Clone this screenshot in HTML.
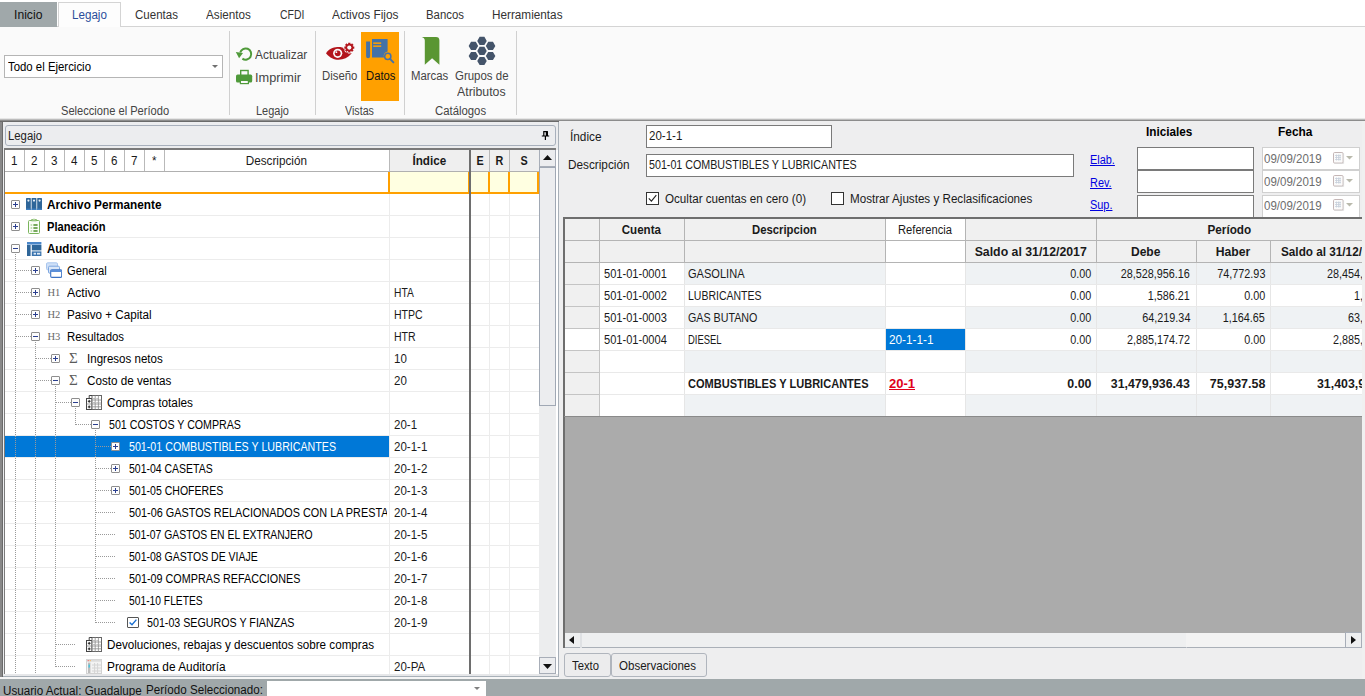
<!DOCTYPE html>
<html>
<head>
<meta charset="utf-8">
<title>Legajo</title>
<style>
*{box-sizing:border-box;margin:0;padding:0}
html,body{width:1365px;height:696px;overflow:hidden;background:#f0f0f0}
body{font-family:"Liberation Sans",sans-serif;font-size:12px;color:#1a1a1a;position:relative}
.a{position:absolute;white-space:nowrap}
.t{position:absolute;white-space:nowrap;line-height:14px;height:14px}
.c{text-align:center}
.r{text-align:right}
.b{font-weight:bold}
/* tabs */
#tabs{left:0;top:0;width:1365px;height:27px;background:#fff}
#tabline{left:0;top:26px;width:1365px;height:1px;background:#d4d4d4}
#tInicio{left:0;top:2px;width:57px;height:25px;background:#a0a8aa}
#tLegajo{left:58px;top:2px;width:63px;height:25px;background:#fdfdfd;border:1px solid #d4d4d4;border-bottom:none}
.tab{top:8px;font-size:12.5px;color:#333}
/* ribbon */
#ribbon{left:0;top:27px;width:1365px;height:92px;background:#fafafa}
.sep{width:1px;top:31px;height:84px;background:#d0d0d0}
.glabel{top:104px;color:#333;font-size:12px}
/* panels */
#darkline{left:0;top:118px;width:1365px;height:4px;background:linear-gradient(#e6e6e6 0 25%,#bcbcbc 25% 50%,#8c8c8c 50% 75%,#6a6a6a 75%)}
#status{left:0;top:679px;width:1365px;height:17px;background:#a0a8aa}

.vd{width:1px;background-image:linear-gradient(#9a9a9a 50%,transparent 50%);background-size:1px 2px}
.hd{height:1px;background-image:linear-gradient(90deg,#9a9a9a 50%,transparent 50%);background-size:2px 1px}
.bx{width:9px;height:9px;border:1px solid #8e8e8e;background:#fdfdfd;border-radius:1px}
.bx i{position:absolute;background:#2b3f8f}
.bx i.h{left:1px;top:3px;width:5px;height:1px}
.bx i.v{left:3px;top:1px;width:1px;height:5px}
</style>
</head>
<body>
<!--TOP-->
<div class="a" id="tabs"></div>
<div class="a" id="tabline"></div>
<div class="a" id="tInicio"></div>
<div class="a" id="tLegajo"></div>
<div class="t" style="top:8px;left:14.4px;transform-origin:0 50%;transform:scaleX(0.9730);color:#111;font-size:12.5px;">Inicio</div>
<div class="t" style="top:8px;left:72.2px;transform-origin:0 50%;transform:scaleX(0.9295);color:#2a4d9b;font-size:12.5px;">Legajo</div>
<div class="t" style="top:8px;left:135.2px;transform-origin:0 50%;transform:scaleX(0.9213);color:#333;font-size:12.5px;">Cuentas</div>
<div class="t" style="top:8px;left:206px;transform-origin:0 50%;transform:scaleX(0.9342);color:#333;font-size:12.5px;">Asientos</div>
<div class="t" style="top:8px;left:279.5px;transform-origin:0 50%;transform:scaleX(0.8364);color:#333;font-size:12.5px;">CFDI</div>
<div class="t" style="top:8px;left:331.5px;transform-origin:0 50%;transform:scaleX(0.9477);color:#333;font-size:12.5px;">Activos Fijos</div>
<div class="t" style="top:8px;left:426px;transform-origin:0 50%;transform:scaleX(0.9112);color:#333;font-size:12.5px;">Bancos</div>
<div class="t" style="top:8px;left:492px;transform-origin:0 50%;transform:scaleX(0.9398);color:#333;font-size:12.5px;">Herramientas</div>
<div class="a" id="ribbon"></div>
<div class="a" style="left:4px;top:55px;width:219px;height:23px;background:#fff;border:1px solid #b5b5b5"></div>
<div class="t" style="top:60px;left:7.5px;transform-origin:0 50%;transform:scaleX(0.9495);color:#000;">Todo el Ejercicio</div>
<svg class="a" style="left:212px;top:65px" width="6" height="3"><path d="M0 0h6L3 3z" fill="#707070"/></svg>
<div class="t" style="top:104px;left:60.5px;transform-origin:0 50%;transform:scaleX(0.9262);color:#444;">Seleccione el Período</div>
<div class="a sep" style="left:229px"></div>
<svg class="a" style="left:232px;top:40px" width="24" height="24" viewBox="0 0 24 24"><path d="M8.2 12.6A5.6 5.6 0 1 1 10.4 18.6" fill="none" stroke="#4f9a3a" stroke-width="2"/><path d="M3.8 12l7.2 1-3.9 5.2z" fill="#4f9a3a"/></svg>
<div class="t" style="top:48px;left:254.9px;transform-origin:0 50%;transform:scaleX(0.9528);color:#444;font-size:12.5px;">Actualizar</div>
<svg class="a" style="left:232px;top:64px" width="24" height="24" viewBox="0 0 24 24"><rect x="8.7" y="6.5" width="7.4" height="6" fill="#fafafa" stroke="#4f9a3a" stroke-width="1.4"/><rect x="4" y="10.6" width="16.2" height="8" rx="1.6" fill="#4f9a3a"/><rect x="8.4" y="16.4" width="8" height="3.2" fill="#fafafa" stroke="#4f9a3a" stroke-width="1.2"/></svg>
<div class="t" style="top:71px;left:254.9px;transform-origin:0 50%;transform:scaleX(1.0197);color:#444;font-size:12.5px;">Imprimir</div>
<div class="t" style="top:104px;left:255.6px;transform-origin:0 50%;transform:scaleX(0.9131);color:#444;">Legajo</div>
<div class="a sep" style="left:315px"></div>
<svg class="a" style="left:318px;top:30px" width="44" height="40" viewBox="0 0 44 40"><path d="M8 23.2C12 17.6 17 17 20.6 17C25.5 17 30 19.5 33.6 23.6C30 27.8 25.5 29.8 20.6 29.8C16 29.8 12 28 8 23.2z" fill="#b3151c"/><circle cx="19.7" cy="23.3" r="4.6" fill="#fafafa"/><circle cx="19.7" cy="23.3" r="2.9" fill="#b3151c"/><circle cx="18.4" cy="22.2" r="0.9" fill="#fafafa"/><path d="M37.15 16.25L37.15 18.95L36.09 19.02L35.69 19.99L36.39 20.78L34.48 22.69L33.69 21.99L32.72 22.39L32.65 23.45L29.95 23.45L29.88 22.39L28.91 21.99L28.12 22.69L26.21 20.78L26.91 19.99L26.51 19.02L25.45 18.95L25.45 16.25L26.51 16.18L26.91 15.21L26.21 14.42L28.12 12.51L28.91 13.21L29.88 12.81L29.95 11.75L32.65 11.75L32.72 12.81L33.69 13.21L34.48 12.51L36.39 14.42L35.69 15.21L36.09 16.18z" fill="#fafafa"/><circle cx="31.3" cy="17.6" r="5.0" fill="#fafafa"/><path d="M36.27 16.45L36.27 18.75L35.04 18.71L34.73 19.46L35.63 20.30L34.00 21.93L33.16 21.03L32.41 21.34L32.45 22.57L30.15 22.57L30.19 21.34L29.44 21.03L28.60 21.93L26.97 20.30L27.87 19.46L27.56 18.71L26.33 18.75L26.33 16.45L27.56 16.49L27.87 15.74L26.97 14.90L28.60 13.27L29.44 14.17L30.19 13.86L30.15 12.63L32.45 12.63L32.41 13.86L33.16 14.17L34.00 13.27L35.63 14.90L34.73 15.74L35.04 16.49z" fill="#b3151c"/><circle cx="31.3" cy="17.6" r="2.1" fill="#fafafa"/></svg>
<div class="t" style="top:69px;left:322.1px;transform-origin:0 50%;transform:scaleX(0.9095);color:#444;font-size:12.5px;">Diseño</div>
<div class="a" style="left:361px;top:32px;width:38px;height:69px;background:#ffa000"></div>
<svg class="a" style="left:361px;top:32px" width="38" height="36" viewBox="0 0 38 36"><path d="M5.1 9.6h4v14.6a2 2 0 0 1-4 0z" fill="#4472a8"/><path d="M11 6.9h15.6v12.6a4.4 4.4 0 0 0-3.6 5.9H11z" fill="#4472a8"/><rect x="12.2" y="10.4" width="8" height="1.5" fill="#ffa000"/><rect x="12.2" y="13.4" width="8" height="1.5" fill="#ffa000"/><circle cx="26.8" cy="24.4" r="3.1" fill="none" stroke="#4472a8" stroke-width="1.5"/><path d="M29 26.8l3.4 3.6" stroke="#4472a8" stroke-width="1.9" stroke-linecap="round"/></svg>
<div class="t" style="top:69px;left:365.7px;transform-origin:0 50%;transform:scaleX(0.9003);color:#111;font-size:12.5px;">Datos</div>
<div class="t" style="top:104px;left:345.3px;transform-origin:0 50%;transform:scaleX(0.8908);color:#444;">Vistas</div>
<div class="a sep" style="left:404px"></div>
<svg class="a" style="left:404px;top:30px" width="112" height="40" viewBox="0 0 112 40"><path d="M17.6 7h14.4a3.4 3.4 0 0 1 3.4 3.4v24.3l-7.3-6.4-7.3 6.4V10.6c0-2-1.2-3.2-3.2-3.6z" fill="#5a9632"/><path d="M82.75 10.90L80.38 15.01L75.62 15.01L73.25 10.90L75.62 6.79L80.38 6.79zM82.75 20.95L80.38 25.06L75.62 25.06L73.25 20.95L75.62 16.84L80.38 16.84zM82.75 31.00L80.38 35.11L75.62 35.11L73.25 31.00L75.62 26.89L80.38 26.89zM74.15 15.90L71.78 20.01L67.03 20.01L64.65 15.90L67.03 11.79L71.78 11.79zM74.15 26.00L71.78 30.11L67.03 30.11L64.65 26.00L67.03 21.89L71.78 21.89zM91.35 15.90L88.97 20.01L84.22 20.01L81.85 15.90L84.22 11.79L88.97 11.79zM91.35 26.00L88.97 30.11L84.22 30.11L81.85 26.00L84.22 21.89L88.97 21.89z" fill="#44546a"/></svg>
<div class="t" style="top:69px;left:411.3px;transform-origin:0 50%;transform:scaleX(0.9105);color:#444;font-size:12.5px;">Marcas</div>

<div class="t" style="top:69px;left:455.4px;transform-origin:0 50%;transform:scaleX(0.9167);color:#444;font-size:12.5px;">Grupos de</div>
<div class="t" style="top:85px;left:457.1px;transform-origin:0 50%;transform:scaleX(0.9852);color:#444;font-size:12.5px;">Atributos</div>
<div class="t" style="top:104px;left:435.4px;transform-origin:0 50%;transform:scaleX(0.9457);color:#444;">Catálogos</div>
<div class="a sep" style="left:516px"></div>
<div class="a" id="darkline"></div>
<!--/TOP-->
<svg width="0" height="0" style="position:absolute"><defs>
<g id="i-arch"><rect x="0" y="2" width="4.8" height="12" rx="0.6" fill="#2f6699"/><rect x="5.6" y="2" width="4.8" height="12" rx="0.6" fill="#2f6699"/><rect x="11.2" y="2" width="4.8" height="12" rx="0.6" fill="#2f6699"/><circle cx="2.4" cy="4.6" r="1.1" fill="#e8f0f8"/><circle cx="8" cy="4.6" r="1.1" fill="#e8f0f8"/><circle cx="13.6" cy="4.6" r="1.1" fill="#e8f0f8"/><rect x="0" y="12.6" width="4.8" height="1.4" fill="#3f7fc0"/><rect x="5.6" y="12.6" width="4.8" height="1.4" fill="#3f7fc0"/><rect x="11.2" y="12.6" width="4.8" height="1.4" fill="#3f7fc0"/></g>
<g id="i-plan"><rect x="2.5" y="2.5" width="11" height="13" rx="1" fill="#fbfdf9" stroke="#7ab55c" stroke-width="1"/><path d="M5.5 2.8V1.6h1.6a1 1 0 0 1 1.8 0h1.6v1.2z" fill="#fbfdf9" stroke="#7ab55c" stroke-width="0.9"/><path d="M4.6 7h1.6M4.6 10h1.6M4.6 13h1.6" stroke="#8cc070" stroke-width="1"/><path d="M7.4 7h4.2M7.4 10h4.2M7.4 13h4.2" stroke="#4e8f2c" stroke-width="1.4"/></g>
<g id="i-aud"><rect x="1" y="2" width="14.4" height="2.6" fill="#4a86c8"/><rect x="1" y="5" width="3.6" height="11" fill="#2f6699"/><rect x="5.8" y="5" width="9.6" height="5.4" fill="#2f6699"/><rect x="5.8" y="11.4" width="9.6" height="4.6" fill="#3a73ad"/><rect x="7.6" y="12.8" width="2.4" height="1.8" fill="#dfe9f5"/><rect x="11" y="12.8" width="3.2" height="1.8" fill="#dfe9f5"/></g>
<g id="i-gen"><rect x="0.5" y="0.8" width="11" height="7" rx="1.2" fill="#cfe0f7" stroke="#a9c6ee" stroke-width="1"/><rect x="2.5" y="4.2" width="11" height="7" rx="1.2" fill="#dbe7f8" stroke="#7da7e0" stroke-width="1"/><rect x="4.7" y="7.8" width="11" height="7.6" rx="1.2" fill="#fff" stroke="#3b72c4" stroke-width="1.1"/><rect x="4.7" y="7.8" width="11" height="2.2" fill="#5b8fd8"/></g>
<g id="i-grid"><rect x="0.5" y="4.5" width="5.5" height="11" fill="#fff" stroke="#444" stroke-width="1"/><rect x="6" y="1.5" width="9.5" height="14" fill="#fff" stroke="#666" stroke-width="1"/><path d="M3.2 1.5v3M3.2 1.5h2.8" stroke="#444" stroke-width="1" fill="none"/><path d="M0.5 10h15M6 6h9.5M6 12.8h9.5M9.2 1.5v14M12.4 1.5v14" stroke="#8a8a8a" stroke-width="0.8" fill="none"/><path d="M1.8 7.3h2.8M3.2 5.9v2.8M1.8 12.9h2.8M3.2 11.5v2.8" stroke="#222" stroke-width="1"/><path d="M7 4l1 1 1-1M10.3 4l1 1 1-1M7 8l1 1 1-1M10.3 8l1 1 1-1M13.2 8l0.8 0.8 0.8-0.8" stroke="#9a9a9a" stroke-width="0.6" fill="none"/></g>
<g id="i-cal"><rect x="0.5" y="1.5" width="15" height="14" fill="#f3f3f3" stroke="#d2d2d2" stroke-width="1"/><rect x="0.5" y="1.5" width="15" height="2.2" fill="#dcdcdc"/><rect x="1.6" y="2" width="1.4" height="1.2" fill="#e88"/><rect x="3.6" y="2" width="1.4" height="1.2" fill="#f2c078"/><rect x="2" y="4.6" width="2.4" height="10.4" fill="#bdbdbd"/><rect x="2.4" y="6.6" width="1.6" height="3" fill="#4fc3dc"/><path d="M6 7h9M6 10h9M6 13h9M8.6 5v10M11.6 5v10" stroke="#d4d4d4" stroke-width="1"/></g>
</defs></svg>
<!--LEFT-->
<!-- LEFT PANEL -->
<div class="a" style="left:0;top:122px;width:5px;height:555px;background:linear-gradient(90deg,#888 0 2px,#6a6a6a 2px 3px,#a6a6a6 3px)"></div>
<div class="a" style="left:3px;top:122px;width:556px;height:556px;background:#ecedef"></div>
<div class="a" style="left:556px;top:150px;width:2px;height:526px;background:#fff"></div>
<div class="a" style="left:5px;top:125px;width:551px;height:21px;background:#ecedef;border:1px solid #a8b0bc;border-radius:3px"></div>
<div class="t" style="top:129px;left:8px;transform-origin:0 50%;transform:scaleX(0.9436);color:#222;">Legajo</div>
<svg class="a" style="left:541px;top:131px" width="9" height="9" viewBox="0 0 9 9"><path d="M2.2 0.6h4.6M2.8 0.6v4M5.4 0.6v4M6.4 0.6v4M0.8 5h7.4M4.4 5v4" stroke="#000" stroke-width="1.2" fill="none"/></svg>
<div class="a" style="left:4px;top:148px;width:552px;height:526px;background:#fff;border-top:2px solid #7a7a7a;border-left:1px solid #7a7a7a"></div>
<div class="a" style="left:389px;top:150px;width:150px;height:21px;background:#efefef"></div>
<div class="a" style="left:24px;top:150px;width:1px;height:21px;background:#b9b9b9"></div>
<div class="a" style="left:44px;top:150px;width:1px;height:21px;background:#b9b9b9"></div>
<div class="a" style="left:64px;top:150px;width:1px;height:21px;background:#b9b9b9"></div>
<div class="a" style="left:84px;top:150px;width:1px;height:21px;background:#b9b9b9"></div>
<div class="a" style="left:104px;top:150px;width:1px;height:21px;background:#b9b9b9"></div>
<div class="a" style="left:124px;top:150px;width:1px;height:21px;background:#b9b9b9"></div>
<div class="a" style="left:144px;top:150px;width:1px;height:21px;background:#b9b9b9"></div>
<div class="a" style="left:164px;top:150px;width:1px;height:21px;background:#b9b9b9"></div>
<div class="a" style="left:389px;top:150px;width:1px;height:21px;background:#b9b9b9"></div>
<div class="a" style="left:489px;top:150px;width:1px;height:21px;background:#b9b9b9"></div>
<div class="a" style="left:509px;top:150px;width:1px;height:21px;background:#b9b9b9"></div>
<div class="a" style="left:5px;top:171px;width:534px;height:1px;background:#b0b0b0"></div>
<div class="t" style="top:154px;left:11.16px;transform-origin:50% 50%;transform:scaleX(0.9700);">1</div>
<div class="t" style="top:154px;left:31.16px;transform-origin:50% 50%;transform:scaleX(0.9700);">2</div>
<div class="t" style="top:154px;left:51.16px;transform-origin:50% 50%;transform:scaleX(0.9700);">3</div>
<div class="t" style="top:154px;left:71.16px;transform-origin:50% 50%;transform:scaleX(0.9700);">4</div>
<div class="t" style="top:154px;left:91.16px;transform-origin:50% 50%;transform:scaleX(0.9700);">5</div>
<div class="t" style="top:154px;left:111.16px;transform-origin:50% 50%;transform:scaleX(0.9700);">6</div>
<div class="t" style="top:154px;left:131.16px;transform-origin:50% 50%;transform:scaleX(0.9700);">7</div>
<div class="t" style="top:154px;left:152.16px;transform-origin:50% 50%;transform:scaleX(0.9700);">*</div>
<div class="t" style="top:154px;left:244.65px;transform-origin:50% 50%;transform:scaleX(0.9760);">Descripción</div>
<div class="t b" style="top:154px;left:411.67px;transform-origin:50% 50%;transform:scaleX(0.9724);">Índice</div>
<div class="t b" style="top:154px;left:475.50px;transform-origin:50% 50%;transform:scaleX(0.9000);">E</div>
<div class="t b" style="top:154px;left:495.16px;transform-origin:50% 50%;transform:scaleX(0.9000);">R</div>
<div class="t b" style="top:154px;left:520.00px;transform-origin:50% 50%;transform:scaleX(0.9000);">S</div>
<div class="a" style="left:389px;top:172px;width:150px;height:20px;background:#ffffe1"></div>
<div class="a" style="left:5px;top:192px;width:534px;height:2px;background:#ffa000"></div>
<div class="a" style="left:388px;top:172px;width:2px;height:20px;background:#ffa000"></div>
<div class="a" style="left:468px;top:172px;width:2px;height:20px;background:#ffa000"></div>
<div class="a" style="left:488px;top:172px;width:2px;height:20px;background:#ffa000"></div>
<div class="a" style="left:508px;top:172px;width:2px;height:20px;background:#ffa000"></div>
<div class="a" style="left:537px;top:172px;width:2px;height:20px;background:#ffa000"></div>
<div class="a" style="left:5px;top:215px;width:534px;height:1px;background:#ececec"></div>
<div class="a" style="left:5px;top:237px;width:534px;height:1px;background:#ececec"></div>
<div class="a" style="left:5px;top:259px;width:534px;height:1px;background:#ececec"></div>
<div class="a" style="left:5px;top:281px;width:534px;height:1px;background:#ececec"></div>
<div class="a" style="left:5px;top:303px;width:534px;height:1px;background:#ececec"></div>
<div class="a" style="left:5px;top:325px;width:534px;height:1px;background:#ececec"></div>
<div class="a" style="left:5px;top:347px;width:534px;height:1px;background:#ececec"></div>
<div class="a" style="left:5px;top:369px;width:534px;height:1px;background:#ececec"></div>
<div class="a" style="left:5px;top:391px;width:534px;height:1px;background:#ececec"></div>
<div class="a" style="left:5px;top:413px;width:534px;height:1px;background:#ececec"></div>
<div class="a" style="left:5px;top:435px;width:534px;height:1px;background:#ececec"></div>
<div class="a" style="left:5px;top:457px;width:534px;height:1px;background:#ececec"></div>
<div class="a" style="left:5px;top:479px;width:534px;height:1px;background:#ececec"></div>
<div class="a" style="left:5px;top:501px;width:534px;height:1px;background:#ececec"></div>
<div class="a" style="left:5px;top:523px;width:534px;height:1px;background:#ececec"></div>
<div class="a" style="left:5px;top:545px;width:534px;height:1px;background:#ececec"></div>
<div class="a" style="left:5px;top:567px;width:534px;height:1px;background:#ececec"></div>
<div class="a" style="left:5px;top:589px;width:534px;height:1px;background:#ececec"></div>
<div class="a" style="left:5px;top:611px;width:534px;height:1px;background:#ececec"></div>
<div class="a" style="left:5px;top:633px;width:534px;height:1px;background:#ececec"></div>
<div class="a" style="left:5px;top:655px;width:534px;height:1px;background:#ececec"></div>
<div class="a" style="left:389px;top:194px;width:1px;height:482px;background:#ececec"></div>
<div class="a" style="left:489px;top:194px;width:1px;height:482px;background:#ececec"></div>
<div class="a" style="left:509px;top:194px;width:1px;height:482px;background:#ececec"></div>
<div class="a" style="left:469px;top:150px;width:2px;height:526px;background:#6e6e6e"></div>
<div class="a" style="left:5px;top:436px;width:384px;height:21px;background:#0078d7"></div>
<div class="a vd" style="left:15px;top:254px;height:419px"></div>
<div class="a vd" style="left:35px;top:342px;height:331px"></div>
<div class="a vd" style="left:55px;top:386px;height:281px"></div>
<div class="a vd" style="left:75px;top:408px;height:17px"></div>
<div class="a vd" style="left:95px;top:430px;height:193px"></div>
<div class="a hd" style="left:16px;top:270px;width:15px"></div>
<div class="a hd" style="left:16px;top:292px;width:15px"></div>
<div class="a hd" style="left:16px;top:314px;width:15px"></div>
<div class="a hd" style="left:16px;top:336px;width:15px"></div>
<div class="a hd" style="left:36px;top:358px;width:15px"></div>
<div class="a hd" style="left:36px;top:380px;width:15px"></div>
<div class="a hd" style="left:56px;top:402px;width:15px"></div>
<div class="a hd" style="left:76px;top:424px;width:15px"></div>
<div class="a hd" style="left:96px;top:446px;width:15px"></div>
<div class="a hd" style="left:96px;top:468px;width:15px"></div>
<div class="a hd" style="left:96px;top:490px;width:15px"></div>
<div class="a hd" style="left:96px;top:512px;width:19px"></div>
<div class="a hd" style="left:96px;top:534px;width:19px"></div>
<div class="a hd" style="left:96px;top:556px;width:19px"></div>
<div class="a hd" style="left:96px;top:578px;width:19px"></div>
<div class="a hd" style="left:96px;top:600px;width:19px"></div>
<div class="a hd" style="left:96px;top:622px;width:19px"></div>
<div class="a hd" style="left:56px;top:644px;width:19px"></div>
<div class="a hd" style="left:56px;top:666px;width:19px"></div>
<div class="a bx" style="left:11px;top:200px"><i class="h"></i><i class="v"></i></div>
<svg class="a" style="left:26px;top:196px" width="16" height="16" viewBox="0 0 16 16"><use href="#i-arch"/></svg>
<div class="t b" style="top:198px;left:47px;transform-origin:0 50%;transform:scaleX(0.9813);color:#000;">Archivo Permanente</div>
<div class="a bx" style="left:11px;top:222px"><i class="h"></i><i class="v"></i></div>
<svg class="a" style="left:26px;top:218px" width="16" height="16" viewBox="0 0 16 16"><use href="#i-plan"/></svg>
<div class="t b" style="top:220px;left:47px;transform-origin:0 50%;transform:scaleX(0.9253);color:#000;">Planeación</div>
<div class="a bx" style="left:11px;top:244px"><i class="h"></i></div>
<svg class="a" style="left:26px;top:240px" width="16" height="16" viewBox="0 0 16 16"><use href="#i-aud"/></svg>
<div class="t b" style="top:242px;left:47px;transform-origin:0 50%;transform:scaleX(0.9609);color:#000;">Auditoría</div>
<div class="a bx" style="left:31px;top:266px"><i class="h"></i><i class="v"></i></div>
<svg class="a" style="left:46px;top:262px" width="16" height="16" viewBox="0 0 16 16"><use href="#i-gen"/></svg>
<div class="t" style="top:264px;left:67px;transform-origin:0 50%;transform:scaleX(0.9324);color:#000;">General</div>
<div class="a bx" style="left:31px;top:288px"><i class="h"></i><i class="v"></i></div>
<div class="t" style="left:47.4px;top:286px;font-family:'Liberation Serif',serif;font-size:10.5px;color:#666">H1</div>
<div class="t" style="top:286px;left:67px;transform-origin:0 50%;transform:scaleX(1.0223);color:#000;">Activo</div>
<div class="t" style="top:286px;left:394.3px;transform-origin:0 50%;transform:scaleX(0.8547);">HTA</div>
<div class="a bx" style="left:31px;top:310px"><i class="h"></i><i class="v"></i></div>
<div class="t" style="left:47.4px;top:308px;font-family:'Liberation Serif',serif;font-size:10.5px;color:#666">H2</div>
<div class="t" style="top:308px;left:67px;transform-origin:0 50%;transform:scaleX(0.9719);color:#000;">Pasivo + Capital</div>
<div class="t" style="top:308px;left:394.3px;transform-origin:0 50%;transform:scaleX(0.8784);">HTPC</div>
<div class="a bx" style="left:31px;top:332px"><i class="h"></i></div>
<div class="t" style="left:47.4px;top:330px;font-family:'Liberation Serif',serif;font-size:10.5px;color:#666">H3</div>
<div class="t" style="top:330px;left:67px;transform-origin:0 50%;transform:scaleX(0.9495);color:#000;">Resultados</div>
<div class="t" style="top:330px;left:394.3px;transform-origin:0 50%;transform:scaleX(0.8795);">HTR</div>
<div class="a bx" style="left:51px;top:354px"><i class="h"></i><i class="v"></i></div>
<div class="t" style="left:69px;top:351px;font-family:'Liberation Serif',serif;font-size:15px;color:#5a5a5a">Σ</div>
<div class="t" style="top:352px;left:87px;transform-origin:0 50%;transform:scaleX(0.9620);color:#000;">Ingresos netos</div>
<div class="t" style="top:352px;left:394.3px;transform-origin:0 50%;transform:scaleX(0.9600);">10</div>
<div class="a bx" style="left:51px;top:376px"><i class="h"></i></div>
<div class="t" style="left:69px;top:373px;font-family:'Liberation Serif',serif;font-size:15px;color:#5a5a5a">Σ</div>
<div class="t" style="top:374px;left:87px;transform-origin:0 50%;transform:scaleX(0.9736);color:#000;">Costo de ventas</div>
<div class="t" style="top:374px;left:394.3px;transform-origin:0 50%;transform:scaleX(0.9600);">20</div>
<div class="a bx" style="left:71px;top:398px"><i class="h"></i></div>
<svg class="a" style="left:86px;top:394px" width="16" height="16" viewBox="0 0 16 16"><use href="#i-grid"/></svg>
<div class="t" style="top:396px;left:107px;transform-origin:0 50%;transform:scaleX(0.9844);color:#000;">Compras totales</div>
<div class="a bx" style="left:91px;top:420px"><i class="h"></i></div>
<div class="t" style="top:418px;left:109.2px;transform-origin:0 50%;transform:scaleX(0.8874);color:#000;">501 COSTOS Y COMPRAS</div>
<div class="t" style="top:418px;left:394.3px;transform-origin:0 50%;transform:scaleX(0.9600);">20-1</div>
<div class="a bx" style="left:111px;top:442px"><i class="h"></i><i class="v"></i></div>
<div class="t" style="top:440px;left:129.2px;transform-origin:0 50%;transform:scaleX(0.8888);color:#fff;">501-01 COMBUSTIBLES Y LUBRICANTES</div>
<div class="t" style="top:440px;left:394.3px;transform-origin:0 50%;transform:scaleX(0.9600);">20-1-1</div>
<div class="a bx" style="left:111px;top:464px"><i class="h"></i><i class="v"></i></div>
<div class="t" style="top:462px;left:129.2px;transform-origin:0 50%;transform:scaleX(0.8730);color:#000;">501-04 CASETAS</div>
<div class="t" style="top:462px;left:394.3px;transform-origin:0 50%;transform:scaleX(0.9600);">20-1-2</div>
<div class="a bx" style="left:111px;top:486px"><i class="h"></i><i class="v"></i></div>
<div class="t" style="top:484px;left:129.2px;transform-origin:0 50%;transform:scaleX(0.8774);color:#000;">501-05 CHOFERES</div>
<div class="t" style="top:484px;left:394.3px;transform-origin:0 50%;transform:scaleX(0.9600);">20-1-3</div>
<div class="a" style="left:129px;top:506px;width:258px;height:14px;overflow:hidden"><div class="t" style="top:0;left:0.19999999999998863px;transform-origin:0 50%;transform:scaleX(0.9040);color:#000;">501-06 GASTOS RELACIONADOS CON LA PRESTACION</div></div>
<div class="t" style="top:506px;left:394.3px;transform-origin:0 50%;transform:scaleX(0.9600);">20-1-4</div>
<div class="t" style="top:528px;left:129.2px;transform-origin:0 50%;transform:scaleX(0.8652);color:#000;">501-07 GASTOS EN EL EXTRANJERO</div>
<div class="t" style="top:528px;left:394.3px;transform-origin:0 50%;transform:scaleX(0.9600);">20-1-5</div>
<div class="t" style="top:550px;left:129.2px;transform-origin:0 50%;transform:scaleX(0.8749);color:#000;">501-08 GASTOS DE VIAJE</div>
<div class="t" style="top:550px;left:394.3px;transform-origin:0 50%;transform:scaleX(0.9600);">20-1-6</div>
<div class="t" style="top:572px;left:129.2px;transform-origin:0 50%;transform:scaleX(0.8984);color:#000;">501-09 COMPRAS REFACCIONES</div>
<div class="t" style="top:572px;left:394.3px;transform-origin:0 50%;transform:scaleX(0.9600);">20-1-7</div>
<div class="t" style="top:594px;left:129.2px;transform-origin:0 50%;transform:scaleX(0.8568);color:#000;">501-10 FLETES</div>
<div class="t" style="top:594px;left:394.3px;transform-origin:0 50%;transform:scaleX(0.9600);">20-1-8</div>
<div class="a" style="left:127px;top:617px;width:12px;height:11px;border:1px solid #555;background:#fff;border-radius:1px"></div>
<svg class="a" style="left:128px;top:618px" width="10" height="9" viewBox="0 0 10 9"><path d="M1.6 4.4l2.4 2.4L8.4 1.6" fill="none" stroke="#1a6fd0" stroke-width="1.4"/></svg>
<div class="t" style="top:616px;left:147.3px;transform-origin:0 50%;transform:scaleX(0.8904);color:#000;">501-03 SEGUROS Y FIANZAS</div>
<div class="t" style="top:616px;left:394.3px;transform-origin:0 50%;transform:scaleX(0.9600);">20-1-9</div>
<svg class="a" style="left:86px;top:636px" width="16" height="16" viewBox="0 0 16 16"><use href="#i-grid"/></svg>
<div class="t" style="top:638px;left:107px;transform-origin:0 50%;transform:scaleX(0.9717);color:#000;">Devoluciones, rebajas y descuentos sobre compras</div>
<svg class="a" style="left:86px;top:658px" width="16" height="16" viewBox="0 0 16 16"><use href="#i-cal"/></svg>
<div class="t" style="top:660px;left:107px;transform-origin:0 50%;transform:scaleX(0.9876);color:#000;">Programa de Auditoría</div>
<div class="t" style="top:660px;left:394.3px;transform-origin:0 50%;transform:scaleX(0.9600);">20-PA</div>
<div class="a" style="left:539px;top:150px;width:17px;height:525px;background:#ecedee"></div>
<div class="a" style="left:539px;top:150px;width:17px;height:17px;background:#ecedef;border:1px solid #a8aeb8;border-top:none"></div>
<div class="a" style="left:539px;top:167px;width:17px;height:239px;background:#ecedef;border:1px solid #a0a8b4"></div>
<div class="a" style="left:539px;top:657px;width:17px;height:17px;background:#ecedef;border:1px solid #a8aeb8"></div>
<svg class="a" style="left:543px;top:155px" width="9" height="5"><path d="M0 5h9L4.5 0z" fill="#111"/></svg>
<svg class="a" style="left:543px;top:664px" width="9" height="5"><path d="M0 0h9L4.5 5z" fill="#111"/></svg>
<div class="a" style="left:558px;top:122px;width:1px;height:555px;background:#a8b0b8"></div>
<div class="a" style="left:5px;top:674px;width:553px;height:2px;background:#e6e7e9"></div>
<div class="a" style="left:3px;top:676px;width:556px;height:1px;background:#a8b0b8"></div>
<div class="a" style="left:0;top:677px;width:1365px;height:2px;background:#f6f6f6"></div>
<!--/LEFT-->
<!--RIGHT-->
<!-- RIGHT PANEL -->
<div class="a" style="left:559px;top:121px;width:806px;height:558px;background:#eeeeef"></div>
<div class="t" style="top:130px;left:570px;transform-origin:0 50%;transform:scaleX(0.9839);">Índice</div>
<div class="a" style="left:646px;top:125px;width:186px;height:23px;background:#fff;border:1px solid #7a7a7a"></div>
<div class="t" style="top:129px;left:649px;transform-origin:0 50%;transform:scaleX(0.9600);">20-1-1</div>
<div class="t" style="top:158px;left:568px;transform-origin:0 50%;transform:scaleX(0.9808);">Descripción</div>
<div class="a" style="left:646px;top:154px;width:428px;height:23px;background:#fff;border:1px solid #7a7a7a"></div>
<div class="t" style="top:158px;left:649px;transform-origin:0 50%;transform:scaleX(0.8914);">501-01 COMBUSTIBLES Y LUBRICANTES</div>
<div class="a" style="left:646px;top:192px;width:13px;height:13px;background:#fff;border:1px solid #333"></div>
<svg class="a" style="left:648px;top:194px" width="9" height="9" viewBox="0 0 9 9"><path d="M0.8 4.4l2.6 2.8L8.3 1.2" fill="none" stroke="#222" stroke-width="1.1"/></svg>
<div class="t" style="top:192px;left:665px;transform-origin:0 50%;transform:scaleX(0.9700);">Ocultar cuentas en cero (0)</div>
<div class="a" style="left:831px;top:192px;width:13px;height:13px;background:#fff;border:1px solid #333"></div>
<div class="t" style="top:192px;left:850px;transform-origin:0 50%;transform:scaleX(0.9697);">Mostrar Ajustes y Reclasificaciones</div>
<div class="t b" style="top:125px;left:1146.4px;transform-origin:0 50%;transform:scaleX(0.9406);color:#000;font-size:12.5px;">Iniciales</div>
<div class="t b" style="top:125px;left:1278.4px;transform-origin:0 50%;transform:scaleX(0.9518);color:#000;font-size:12.5px;">Fecha</div>
<div class="t" style="top:153px;left:1090px;transform-origin:0 50%;transform:scaleX(0.9100);color:#0000e0;text-decoration:underline;">Elab.</div>
<div class="a" style="left:1137px;top:147px;width:117px;height:23px;background:#fff;border:1px solid #7a7a7a"></div>
<div class="a" style="left:1262px;top:147px;width:98px;height:23px;background:#fff;border:1px solid #d0d0d0"></div>
<div class="t" style="top:152px;left:1264px;transform-origin:0 50%;transform:scaleX(0.9595);color:#6d6d6d;">09/09/2019</div>
<svg class="a" style="left:1333px;top:152px" width="21" height="12" viewBox="0 0 21 12"><rect x="0.5" y="0.5" width="9.6" height="10.6" rx="1.2" fill="#fbfbfb" stroke="#c4b6b6"/><path d="M1.5 11.4h9M10.6 1.5v10" stroke="#d8d8d8" stroke-width="0.8"/><path d="M2 3.5h6M2 5.5h6M2 7.5h6M3.5 2.5v6M5.5 2.5v6M7 2.5v6" stroke="#c8d0dc" stroke-width="0.8"/><path d="M13 4h7L16.5 7.6z" fill="#b9b9ac"/></svg>
<div class="t" style="top:176px;left:1090px;transform-origin:0 50%;transform:scaleX(0.9100);color:#0000e0;text-decoration:underline;">Rev.</div>
<div class="a" style="left:1137px;top:170px;width:117px;height:23px;background:#fff;border:1px solid #7a7a7a"></div>
<div class="a" style="left:1262px;top:170px;width:98px;height:23px;background:#fff;border:1px solid #d0d0d0"></div>
<div class="t" style="top:175px;left:1264px;transform-origin:0 50%;transform:scaleX(0.9595);color:#6d6d6d;">09/09/2019</div>
<svg class="a" style="left:1333px;top:175px" width="21" height="12" viewBox="0 0 21 12"><rect x="0.5" y="0.5" width="9.6" height="10.6" rx="1.2" fill="#fbfbfb" stroke="#c4b6b6"/><path d="M1.5 11.4h9M10.6 1.5v10" stroke="#d8d8d8" stroke-width="0.8"/><path d="M2 3.5h6M2 5.5h6M2 7.5h6M3.5 2.5v6M5.5 2.5v6M7 2.5v6" stroke="#c8d0dc" stroke-width="0.8"/><path d="M13 4h7L16.5 7.6z" fill="#b9b9ac"/></svg>
<div class="t" style="top:198px;left:1090px;transform-origin:0 50%;transform:scaleX(0.9100);color:#0000e0;text-decoration:underline;">Sup.</div>
<div class="a" style="left:1137px;top:195px;width:117px;height:23px;background:#fff;border:1px solid #7a7a7a"></div>
<div class="a" style="left:1262px;top:195px;width:98px;height:23px;background:#fff;border:1px solid #d0d0d0"></div>
<div class="t" style="top:199px;left:1264px;transform-origin:0 50%;transform:scaleX(0.9595);color:#6d6d6d;">09/09/2019</div>
<svg class="a" style="left:1333px;top:199px" width="21" height="12" viewBox="0 0 21 12"><rect x="0.5" y="0.5" width="9.6" height="10.6" rx="1.2" fill="#fbfbfb" stroke="#c4b6b6"/><path d="M1.5 11.4h9M10.6 1.5v10" stroke="#d8d8d8" stroke-width="0.8"/><path d="M2 3.5h6M2 5.5h6M2 7.5h6M3.5 2.5v6M5.5 2.5v6M7 2.5v6" stroke="#c8d0dc" stroke-width="0.8"/><path d="M13 4h7L16.5 7.6z" fill="#b9b9ac"/></svg>
<div class="a" style="left:563px;top:217px;width:799px;height:431px;overflow:hidden;background:#ababab">
<div class="a" style="left:1px;top:2px;width:798px;height:43px;background:#f0f0f0;"></div>
<div class="a" style="left:322px;top:2px;width:80px;height:43px;background:#fff;"></div>
<div class="a" style="left:1px;top:45px;width:35px;height:22px;background:#f0f0f0;"></div>
<div class="a" style="left:36px;top:45px;width:763px;height:22px;background:#fff;"></div>
<div class="a" style="left:121px;top:45px;width:201px;height:22px;background:#eff2f4;"></div>
<div class="a" style="left:402px;top:45px;width:397px;height:22px;background:#eff2f4;"></div>
<div class="a" style="left:1px;top:67px;width:35px;height:22px;background:#f0f0f0;"></div>
<div class="a" style="left:36px;top:67px;width:763px;height:22px;background:#fff;"></div>
<div class="a" style="left:1px;top:89px;width:35px;height:22px;background:#f0f0f0;"></div>
<div class="a" style="left:36px;top:89px;width:763px;height:22px;background:#fff;"></div>
<div class="a" style="left:121px;top:89px;width:201px;height:22px;background:#eff2f4;"></div>
<div class="a" style="left:402px;top:89px;width:397px;height:22px;background:#eff2f4;"></div>
<div class="a" style="left:1px;top:111px;width:35px;height:22px;background:#f0f0f0;"></div>
<div class="a" style="left:36px;top:111px;width:763px;height:22px;background:#fff;"></div>
<div class="a" style="left:1px;top:133px;width:35px;height:22px;background:#f0f0f0;"></div>
<div class="a" style="left:36px;top:133px;width:763px;height:22px;background:#fff;"></div>
<div class="a" style="left:121px;top:133px;width:201px;height:22px;background:#eff2f4;"></div>
<div class="a" style="left:402px;top:133px;width:397px;height:22px;background:#eff2f4;"></div>
<div class="a" style="left:1px;top:155px;width:35px;height:22px;background:#f0f0f0;"></div>
<div class="a" style="left:36px;top:155px;width:763px;height:22px;background:#fff;"></div>
<div class="a" style="left:1px;top:177px;width:35px;height:22px;background:#f0f0f0;"></div>
<div class="a" style="left:36px;top:177px;width:763px;height:22px;background:#fff;"></div>
<div class="a" style="left:121px;top:177px;width:201px;height:22px;background:#eff2f4;"></div>
<div class="a" style="left:402px;top:177px;width:397px;height:22px;background:#eff2f4;"></div>
<div class="a" style="left:1px;top:111px;width:35px;height:22px;background:#fff;"></div>
<div class="a" style="left:322px;top:112px;width:80px;height:21px;background:#0078d7;"></div>
<div class="a" style="left:36px;top:2px;width:1px;height:43px;background:#b4b4b4;"></div>
<div class="a" style="left:36px;top:45px;width:1px;height:154px;background:#c4c4c4;"></div>
<div class="a" style="left:121px;top:2px;width:1px;height:43px;background:#b4b4b4;"></div>
<div class="a" style="left:121px;top:45px;width:1px;height:154px;background:#e6e6e6;"></div>
<div class="a" style="left:322px;top:2px;width:1px;height:43px;background:#b4b4b4;"></div>
<div class="a" style="left:322px;top:45px;width:1px;height:154px;background:#e6e6e6;"></div>
<div class="a" style="left:402px;top:2px;width:1px;height:43px;background:#b4b4b4;"></div>
<div class="a" style="left:402px;top:45px;width:1px;height:154px;background:#e6e6e6;"></div>
<div class="a" style="left:533px;top:2px;width:1px;height:43px;background:#b4b4b4;"></div>
<div class="a" style="left:533px;top:45px;width:1px;height:154px;background:#e6e6e6;"></div>
<div class="a" style="left:633px;top:2px;width:1px;height:43px;background:#b4b4b4;"></div>
<div class="a" style="left:633px;top:45px;width:1px;height:154px;background:#e6e6e6;"></div>
<div class="a" style="left:707px;top:2px;width:1px;height:43px;background:#b4b4b4;"></div>
<div class="a" style="left:707px;top:45px;width:1px;height:154px;background:#e6e6e6;"></div>
<div class="a" style="left:36px;top:45px;width:1px;height:154px;background:#c4c4c4;"></div>
<div class="a" style="left:1px;top:23px;width:401px;height:1px;background:#b4b4b4;"></div>
<div class="a" style="left:402px;top:23px;width:397px;height:1px;background:#b4b4b4;"></div>
<div class="a" style="left:1px;top:45px;width:798px;height:1px;background:#b4b4b4;"></div>
<div class="a" style="left:534px;top:2px;width:265px;height:21px;background:#f0f0f0;"></div>
<div class="a" style="left:1px;top:67px;width:35px;height:1px;background:#c4c4c4;"></div>
<div class="a" style="left:37px;top:67px;width:762px;height:1px;background:#e9e9e9;"></div>
<div class="a" style="left:1px;top:89px;width:35px;height:1px;background:#c4c4c4;"></div>
<div class="a" style="left:37px;top:89px;width:762px;height:1px;background:#e9e9e9;"></div>
<div class="a" style="left:1px;top:111px;width:35px;height:1px;background:#c4c4c4;"></div>
<div class="a" style="left:37px;top:111px;width:762px;height:1px;background:#e9e9e9;"></div>
<div class="a" style="left:1px;top:133px;width:35px;height:1px;background:#c4c4c4;"></div>
<div class="a" style="left:37px;top:133px;width:762px;height:1px;background:#e9e9e9;"></div>
<div class="a" style="left:1px;top:155px;width:35px;height:1px;background:#c4c4c4;"></div>
<div class="a" style="left:37px;top:155px;width:762px;height:1px;background:#e9e9e9;"></div>
<div class="a" style="left:1px;top:177px;width:35px;height:1px;background:#c4c4c4;"></div>
<div class="a" style="left:37px;top:177px;width:762px;height:1px;background:#e9e9e9;"></div>
<div class="a" style="left:1px;top:199px;width:35px;height:1px;background:#c4c4c4;"></div>
<div class="a" style="left:37px;top:199px;width:762px;height:1px;background:#e9e9e9;"></div>
<div class="a" style="left:0px;top:0px;width:799px;height:2px;background:#6e6e6e;"></div>
<div class="a" style="left:0px;top:0px;width:2px;height:431px;background:#6e6e6e;"></div>
<div class="a" style="left:1px;top:199px;width:798px;height:1px;background:#8a8a8a;"></div>
</div>
<div class="a" style="left:0;top:0;width:1365px;height:696px;clip-path:inset(0 3px 0 0)">
<div class="t b" style="top:223px;left:621.16px;transform-origin:50% 50%;transform:scaleX(0.9638);">Cuenta</div>
<div class="t b" style="top:223px;left:750.16px;transform-origin:50% 50%;transform:scaleX(0.9422);">Descripcion</div>
<div class="t" style="top:223px;left:895.98px;transform-origin:50% 50%;transform:scaleX(0.9305);">Referencia</div>
<div class="t b" style="top:223px;left:1206.67px;transform-origin:50% 50%;transform:scaleX(0.9786);">Período</div>
<div class="t b" style="top:245px;left:975.83px;transform-origin:50% 50%;transform:scaleX(1.0243);">Saldo al 31/12/2017</div>
<div class="t b" style="top:245px;left:1131.33px;transform-origin:50% 50%;transform:scaleX(1.0053);">Debe</div>
<div class="t b" style="top:245px;left:1215.99px;transform-origin:50% 50%;transform:scaleX(1.0142);">Haber</div>
<div class="t b" style="top:245px;left:1281px;transform-origin:0 50%;transform:scaleX(0.9786);">Saldo al 31/12/2017</div>
<div class="t" style="top:267px;left:604.3px;transform-origin:0 50%;transform:scaleX(0.9229);">501-01-0001</div>
<div class="t" style="top:267px;left:688.3px;transform-origin:0 50%;transform:scaleX(0.9213);">GASOLINA</div>
<div class="t" style="top:267px;right:273.5999999999999px;transform-origin:100% 50%;transform:scaleX(0.9000);">0.00</div>
<div class="t" style="top:267px;right:175px;transform-origin:100% 50%;transform:scaleX(0.9000);">28,528,956.16</div>
<div class="t" style="top:267px;right:100px;transform-origin:100% 50%;transform:scaleX(0.9000);">74,772.93</div>
<div class="t" style="top:267px;left:1327px;transform-origin:0 50%;transform:scaleX(0.9000);">28,454,183.23</div>
<div class="t" style="top:289px;left:604.3px;transform-origin:0 50%;transform:scaleX(0.9229);">501-01-0002</div>
<div class="t" style="top:289px;left:688.3px;transform-origin:0 50%;transform:scaleX(0.8748);">LUBRICANTES</div>
<div class="t" style="top:289px;right:273.5999999999999px;transform-origin:100% 50%;transform:scaleX(0.9000);">0.00</div>
<div class="t" style="top:289px;right:175px;transform-origin:100% 50%;transform:scaleX(0.9000);">1,586.21</div>
<div class="t" style="top:289px;right:100px;transform-origin:100% 50%;transform:scaleX(0.9000);">0.00</div>
<div class="t" style="top:289px;left:1354.4px;transform-origin:0 50%;transform:scaleX(0.9000);">1,586.21</div>
<div class="t" style="top:311px;left:604.3px;transform-origin:0 50%;transform:scaleX(0.9229);">501-01-0003</div>
<div class="t" style="top:311px;left:688.3px;transform-origin:0 50%;transform:scaleX(0.8926);">GAS BUTANO</div>
<div class="t" style="top:311px;right:273.5999999999999px;transform-origin:100% 50%;transform:scaleX(0.9000);">0.00</div>
<div class="t" style="top:311px;right:175px;transform-origin:100% 50%;transform:scaleX(0.9000);">64,219.34</div>
<div class="t" style="top:311px;right:100px;transform-origin:100% 50%;transform:scaleX(0.9000);">1,164.65</div>
<div class="t" style="top:311px;left:1348.4px;transform-origin:0 50%;transform:scaleX(0.9000);">63,054.69</div>
<div class="t" style="top:333px;left:604.3px;transform-origin:0 50%;transform:scaleX(0.9229);">501-01-0004</div>
<div class="t" style="top:333px;left:688.3px;transform-origin:0 50%;transform:scaleX(0.7874);">DIESEL</div>
<div class="t" style="top:333px;right:273.5999999999999px;transform-origin:100% 50%;transform:scaleX(0.9000);">0.00</div>
<div class="t" style="top:333px;right:175px;transform-origin:100% 50%;transform:scaleX(0.9000);">2,885,174.72</div>
<div class="t" style="top:333px;right:100px;transform-origin:100% 50%;transform:scaleX(0.9000);">0.00</div>
<div class="t" style="top:333px;left:1333px;transform-origin:0 50%;transform:scaleX(0.9000);">2,885,174.72</div>
<div class="t" style="top:333px;left:889px;transform-origin:0 50%;transform:scaleX(0.9811);color:#fff;">20-1-1-1</div>
<div class="t b" style="top:377px;left:688.3px;transform-origin:0 50%;transform:scaleX(0.9203);">COMBUSTIBLES Y LUBRICANTES</div>
<div class="t b" style="top:377px;left:889px;transform-origin:0 50%;transform:scaleX(1.0826);color:#e0001b;text-decoration:underline;">20-1</div>
<div class="t b" style="top:377px;right:273.5999999999999px;transform-origin:100% 50%;transform:scaleX(1.0281);">0.00</div>
<div class="t b" style="top:377px;right:175px;transform-origin:100% 50%;transform:scaleX(1.0286);">31,479,936.43</div>
<div class="t b" style="top:377px;right:100px;transform-origin:100% 50%;transform:scaleX(1.0401);">75,937.58</div>
<div class="t b" style="top:377px;left:1317px;transform-origin:0 50%;transform:scaleX(1.0286);">31,403,998.85</div>
</div>
<div class="a" style="left:565px;top:633px;width:797px;height:15px;background:#eeeff0;border-bottom:1px solid #aab0b8"></div>
<div class="a" style="left:580px;top:633px;width:2px;height:15px;background:#dfe1e4"></div>
<div class="a" style="left:1186px;top:633px;width:1px;height:15px;background:#c9ccd1"></div>
<div class="a" style="left:1186px;top:633px;width:159px;height:14px;background:#f3f3f3"></div>
<div class="a" style="left:1345px;top:632px;width:17px;height:16px;background:#eeeff0;border:1px solid #a8aeb8"></div>
<svg class="a" style="left:569px;top:636px" width="5" height="8"><path d="M5 0v8L0 4z" fill="#111"/></svg>
<svg class="a" style="left:1351px;top:636px" width="5" height="8"><path d="M0 0v8L5 4z" fill="#111"/></svg>
<div class="a" style="left:564px;top:653px;width:47px;height:24px;background:#ececed;border:1px solid #b0b5bd;border-radius:3px"></div>
<div class="a" style="left:611px;top:653px;width:96px;height:24px;background:#ececed;border:1px solid #b0b5bd;border-radius:3px"></div>
<div class="t" style="top:659px;left:572.3px;transform-origin:0 50%;transform:scaleX(0.9407);">Texto</div>
<div class="t" style="top:659px;left:619.3px;transform-origin:0 50%;transform:scaleX(0.9621);">Observaciones</div>
<div class="a" style="left:1362px;top:121px;width:3px;height:558px;background:#f0f0f0"></div>
<!--/RIGHT-->
<!--STATUS-->
<div class="a" id="status"></div>
<div class="t" style="top:684px;left:3.3px;transform-origin:0 50%;transform:scaleX(0.9715);color:#111;">Usuario Actual: Guadalupe</div>
<div class="t" style="top:683px;left:146.2px;transform-origin:0 50%;transform:scaleX(0.9684);color:#111;">Período Seleccionado:</div>
<div class="a" style="left:267px;top:681px;width:219px;height:15px;background:#fff"></div>
<svg class="a" style="left:474px;top:687px" width="6" height="3"><path d="M0 0h6L3 3z" fill="#808080"/></svg>
<!--/STATUS-->
</body>
</html>
